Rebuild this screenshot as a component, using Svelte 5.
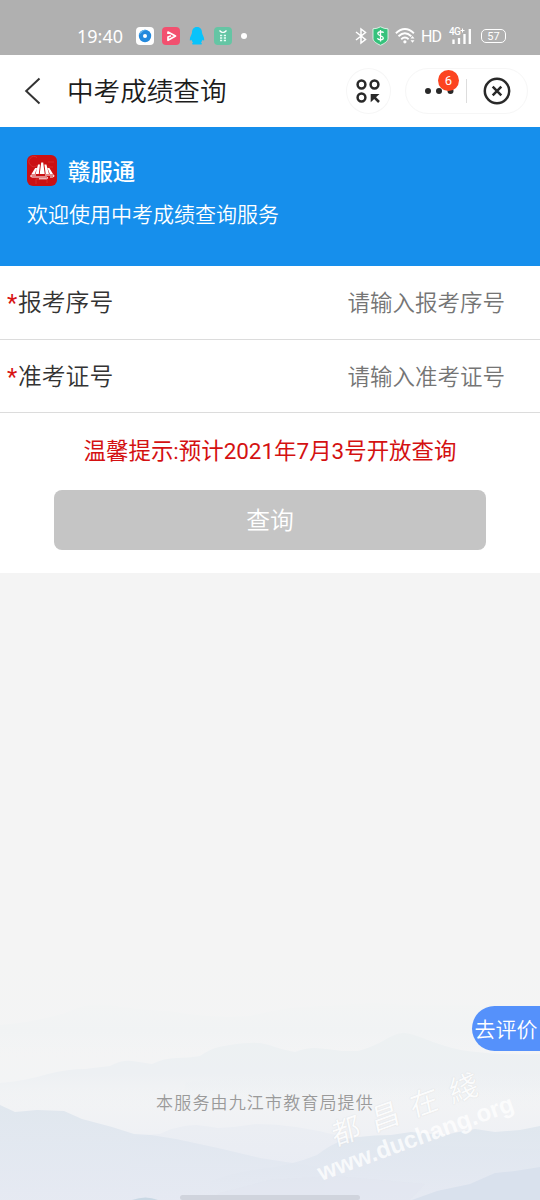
<script lang="ts">
	interface Field {
		id: string
		label: string
		placeholder: string
	}

	const fields: Field[] = [
		{ id: 'serial', label: '报考序号', placeholder: '请输入报考序号' },
		{ id: 'ticket', label: '准考证号', placeholder: '请输入准考证号' },
	]

	let values: Record<string, string> = $state({ serial: '', ticket: '' })
	let unread = $state(6)
</script>

<div class="page">
	<div class="status-bar">
		<span class="time">19:40</span>
		<svg class="apps" width="114" height="20" viewBox="0 0 114 20">
			<rect x="1" y="1" width="18" height="18" rx="4" fill="#fff" />
			<circle cx="10" cy="10" r="6.2" fill="#2389dd" />
			<path d="M4 9a6.2 6.2 0 0 1 8-4.9c-4 0-5 3-8 4.900z" fill="#68b7ee" />
			<circle cx="10" cy="10" r="2" fill="#fff" />
			<rect x="27" y="1" width="18" height="18" rx="4" fill="#f2506f" />
			<path
				d="M33 8V6l7.500 4-7.500 4.300V11l3-1.200"
				fill="none"
				stroke="#fff"
				stroke-width="1.700"
				stroke-linejoin="round"
			/>
			<path
				d="M62 1c-3.500 0-5 2.500-5 5.500 0 2-2.200 4-2.200 7.200 0 1.500 1 .8 1.700 0 .3 1.300.8 2 1.500 2.700-1.500.8-1 2.100.5 2.100h7c1.500 0 2-1.300.5-2.100.7-.7 1.200-1.400 1.500-2.700.7.8 1.700 1.500 1.700 0 0-3.200-2.200-5.200-2.200-7.200C67 3.500 65.500 1 62 1z"
				fill="#08c3fb"
			/>
			<rect x="79" y="1" width="18" height="18" rx="4" fill="#65c5a4" />
			<path d="M84.500 4.500q3.500 4 7 0" fill="none" stroke="#fff" stroke-width="1.200" />
			<path
				d="M85 9.500h2.200M88.800 9.500H91M85 12h2.200M88.800 12H91M85 14.500h2.200M88.800 14.500H91"
				stroke="#e6fff5"
				stroke-width="1.500"
			/>
			<circle cx="109" cy="10" r="3" fill="#fff" />
		</svg>
		<div class="system">
			<svg width="12" height="18" viewBox="0 0 12 18">
				<path
					d="M1 5l9.500 7.500L6 16V2l4.500 3.500L1 13"
					fill="none"
					stroke="#fff"
					stroke-width="1.500"
				/>
			</svg>
			<svg class="shield" width="17" height="20" viewBox="0 0 17 20">
				<path
					d="M8.500.8q3.500 2 7.500 2v9.500c0 3-3.500 5.200-7.500 7-4-1.800-7.500-4-7.500-7V2.800q4 0 7.500-2z"
					fill="#36c27c"
					stroke="#e5f5ec"
					stroke-width=".9"
				/>
				<path
					d="M11.600 6.800C11 5.500 6 5 5.800 7.600c-.1 2.500 5.500 1.800 5.500 4.400 0 2.400-5 2.300-5.900.3M8.500 4v11.500"
					fill="none"
					stroke="#fff"
					stroke-width="1.300"
				/>
			</svg>
			<svg class="wifi" width="22" height="18" viewBox="0 0 22 18">
				<g fill="none" stroke="#fff" stroke-width="1.900">
					<path d="M.9 6.200q9-8.200 18 0" />
					<path d="M3.500 9.200q6.400-5.800 12.800 0" />
					<path d="M6.200 12.200q3.700-3.200 7.400 0" />
				</g>
				<circle cx="9.900" cy="14.800" r="1.600" fill="#fff" />
				<path d="M15.500 11.500l2-2.500 2 2.500zM15.500 13.300l2 2.500 2-2.500z" fill="#fff" />
			</svg>
			<span class="hd">HD</span>
			<div class="signal">
				<span>4G</span>
				<svg width="23" height="18" viewBox="0 0 23 18">
					<path d="M11.500 3.500h4M13.500 1.500v4" stroke="#fff" stroke-width="1" />
					<path
						d="M4.500 17v-4.500M10 17v-6M15.500 17V7M20.800 17V2"
						stroke="#fff"
						stroke-width="2.300"
					/>
				</svg>
			</div>
			<div class="battery"><span>57</span></div>
		</div>
	</div>

	<header class="nav">
		<svg class="back" width="18" height="28" viewBox="0 0 18 28">
			<path d="M15.500 1.500L2.200 14l13.300 12.500" fill="none" stroke="#333" stroke-width="2" />
		</svg>
		<h1>中考成绩查询</h1>
		<button class="round" aria-label="apps">
			<svg width="25" height="25" viewBox="0 0 25 25">
				<g fill="none" stroke="#292929" stroke-width="2.500">
					<circle cx="5.500" cy="5.500" r="3.900" />
					<circle cx="18.500" cy="5.500" r="3.900" />
					<circle cx="5.500" cy="18.500" r="3.900" />
					<path d="M16.500 16.500l6.500 6.500" />
				</g>
				<path d="M14.700 15h8.800l-3 2.700-2.800 2.800-3 2.700z" fill="#292929" />
			</svg>
		</button>
		<div class="capsule">
			<button class="more" aria-label="more">
				<svg width="30" height="8" viewBox="0 0 30 8" fill="#292929">
					<circle cx="4" cy="4" r="3" />
					<circle cx="15" cy="4" r="3" />
					<circle cx="26.500" cy="4" r="3" />
				</svg>
				{#if unread}
					<span class="badge">{unread}</span>
				{/if}
			</button>
			<span class="divider"></span>
			<button class="close" aria-label="close">
				<svg width="28" height="28" viewBox="0 0 28 28">
					<g fill="none" stroke="#292929" stroke-width="2.500">
						<circle cx="14" cy="14" r="12.200" />
						<path d="M9.700 9.700l8.600 8.600M18.300 9.700l-8.600 8.600" />
					</g>
				</svg>
			</button>
		</div>
	</header>

	<section class="banner">
		<div class="brand">
			<svg width="30" height="31" viewBox="0 0 30 31">
				<rect width="30" height="31" rx="6" fill="#cb1013" />
				<path
					d="M10 2.500a5 5 0 1 0 0 8M21 7h6M21 12h5M9 29v-5h4M20 28v-4"
					fill="none"
					stroke="#d63334"
					stroke-width=".8"
				/>
				<path
					d="M14.200 7.500h2l1.500 11.500h-5zM11 9.500h2L11.800 19H8.500zM17.400 9.500h2l2.600 9.500h-3.300zM8.200 13h1.900L7.800 19H4.500zM20.500 13h1.900l3.600 6h-3.200z"
					fill="#fff"
				/>
				<path
					d="M9 20H4.300q-1.700 1.700.7 2h14.500c1.500.1 1.500 1.700 0 1.800H12M18 20h8.700q1 1.800-1 2H23"
					fill="none"
					stroke="#fff"
					stroke-width="1"
				/>
			</svg>
			<strong>赣服通</strong>
		</div>
		<p>欢迎使用中考成绩查询服务</p>
	</section>

	<form class="form">
		{#each fields as field (field.id)}
			<div class="row">
				<label for={field.id}><i>*</i>{field.label}</label>
				<input id={field.id} placeholder={field.placeholder} bind:value={values[field.id]} />
			</div>
		{/each}
		<p class="notice">温馨提示:预计2021年7月3号开放查询</p>
		<button class="submit" type="button">查询</button>
	</form>

	<footer>
		<svg class="hills" width="540" height="240" viewBox="0 0 540 240">
			<defs>
				<linearGradient id="sky" x1="0" y1="0" x2="0" y2="1">
					<stop offset="0" stop-color="#f4f4f4" />
					<stop offset=".55" stop-color="#f3f4f5" />
					<stop offset="1" stop-color="#e9ecf4" />
				</linearGradient>
				<linearGradient id="far" x1="0" y1="0" x2="0" y2="1">
					<stop offset="0" stop-color="#edf1f2" />
					<stop offset=".5" stop-color="#edf0f3" />
					<stop offset="1" stop-color="#f1f3f5" stop-opacity="0" />
				</linearGradient>
				<linearGradient id="mist" x1="0" y1="0" x2="0" y2="1">
					<stop offset="0" stop-color="#f3f4f4" />
					<stop offset=".5" stop-color="#f1f3f4" />
					<stop offset="1" stop-color="#f3f4f5" stop-opacity="0" />
				</linearGradient>
				<linearGradient id="mid" x1="0" y1="0" x2="0" y2="1">
					<stop offset="0" stop-color="#ebeef3" />
					<stop offset="1" stop-color="#e8ebf4" />
				</linearGradient>
				<linearGradient id="near" x1="0" y1="0" x2="0" y2="1">
					<stop offset="0" stop-color="#dde5ed" />
					<stop offset=".5" stop-color="#e1e7f0" />
					<stop offset="1" stop-color="#e5e9f2" />
				</linearGradient>
			</defs>
			<rect width="540" height="240" fill="url(#sky)" />
			<path
				d="M0 65q35-3 65-12 22-11 44-8 30 5 60 6 45 8 81 5 40-11 78-10 40-5 80-1 65-2 132 5v50H0z"
				fill="url(#mist)"
			/>
			<path
				d="M0 123q25-2 48-9 20-5 37-5l25-3q11-6 22-5l20 3q12-6 25-6 12 0 23-2 10-7 19-9 20-4 30-4 10-1 20 2 14 5 26 7 10-4 20-4 14 1 27 3h16q12-3 25-10 14-9 22-8 8 1 15 4 12 5 25 9 16 5 32 6 22 3 63 2v60H0z"
				fill="url(#far)"
			/>
			<path d="M185 122l60-6h45l55-8 90 2 105-5v40H185z" fill="url(#far)" opacity=".35" />
			<path
				d="M130 179q20-5 30-5 10-5 16-6 10-3 20-3 10 1 22 3 20-1 38-4 20 0 40 3 20 3 40 8 25 8 50 9l154 5v51H130z"
				fill="url(#mid)"
			/>
			<path
				d="M0 145l15 7 22-2 27 1 18 8 30 8 22 7 17 1 25 4 42 9 42 10 65 10v32H0z"
				fill="url(#near)"
				opacity=".85"
			/>
			<path
				d="M210 221q25-9 50-12 30-3 57-14 22-17 42-18 15-2 32-2l20-3 33 3 15-3 16-3 20 3 25-2 20-4v74H210z"
				fill="url(#near)"
				opacity=".85"
			/>
			<path d="M220 233l50-13 65-4 90 8-15 16H210z" fill="#e1e6f0" opacity=".5" />
			<path d="M412 240l25-9 33-7 25-11 20-2 25-4v33z" fill="#d9e1ed" />
			<path d="M132 240q14-5 26 0z" fill="#c9d8e4" />
		</svg>
		<p>本服务由九江市教育局提供</p>
		<div class="watermark">
			<div class="watermark-name">
				<span>都</span><span>昌</span><span>在</span><span>綫</span>
			</div>
			<div class="watermark-url">www.duchang.org</div>
		</div>
		<div class="home-bar"></div>
	</footer>

	<button class="rate">去评价</button>
</div>

<style>
	:global(body) {
		margin: 0;
	}

	.page {
		position: relative;
		display: flex;
		flex-direction: column;
		width: 540px;
		height: 1200px;
		overflow: hidden;
		background: #f4f4f4;
		font-family: Roboto, 'Noto Sans CJK SC', sans-serif;
		color: #333;
	}

	h1,
	p {
		margin: 0;
		font-weight: 350;
	}

	button {
		display: flex;
		align-items: center;
		justify-content: center;
		border: 0;
		padding: 0;
		background: none;
		font-family: inherit;
	}

	svg {
		display: block;
		flex-shrink: 0;
	}

	.status-bar {
		display: flex;
		align-items: center;
		box-sizing: border-box;
		height: 55px;
		padding: 17px 34px 0 77px;
		background: #b0b0b0;
		color: #fff;
	}

	.time {
		width: 58px;
		font-family: 'Noto Sans', sans-serif;
		font-size: 18px;
		line-height: 20px;
	}

	.system {
		display: flex;
		align-items: center;
		margin-left: auto;
	}

	.shield {
		margin-left: 5px;
	}

	.wifi {
		margin-left: 6px;
	}

	.hd {
		margin-left: 4px;
		font-size: 16px;
		letter-spacing: -1px;
		transform: scaleY(1.05);
	}

	.signal {
		position: relative;
		margin-left: 8px;
	}

	.signal span {
		position: absolute;
		top: 0;
		left: 0;
		font-size: 10px;
		font-weight: 500;
		line-height: 9px;
		letter-spacing: -0.8px;
	}

	.battery {
		display: flex;
		align-items: center;
		justify-content: center;
		box-sizing: border-box;
		width: 25px;
		height: 14px;
		margin-left: 9px;
		border: 1.5px solid #fff;
		border-radius: 5px;
		font-size: 11px;
		line-height: 11px;
	}

	.nav {
		display: flex;
		align-items: center;
		box-sizing: border-box;
		height: 72px;
		padding: 0 12px 0 24px;
		background: #fff;
	}

	h1 {
		margin-left: 25px;
		padding-top: 2px;
		font-size: 26.6px;
		line-height: 40px;
		color: #1c1c1c;
	}

	.round {
		box-sizing: border-box;
		width: 45px;
		height: 46px;
		margin-left: auto;
		border: 1px solid #f6f6f6;
		border-radius: 50%;
	}

	.capsule {
		display: flex;
		align-items: center;
		box-sizing: border-box;
		width: 123px;
		height: 46px;
		margin-left: 14px;
		border: 1px solid #f6f6f6;
		border-radius: 23px;
	}

	.more {
		position: relative;
		width: 60px;
		height: 44px;
		padding-left: 5px;
	}

	.badge {
		position: absolute;
		top: 1px;
		left: 32px;
		width: 21px;
		height: 21px;
		border-radius: 50%;
		background: #fc4420;
		color: #fff;
		font-size: 13px;
		line-height: 22px;
		text-align: center;
	}

	.divider {
		width: 1px;
		height: 24px;
		background: #ddd;
	}

	.close {
		flex: 1;
	}

	.banner {
		box-sizing: border-box;
		height: 139px;
		padding: 28px 27px 0;
		background: #168fec;
		color: #fff;
	}

	.brand {
		display: flex;
		align-items: center;
		gap: 11px;
		height: 31px;
	}

	.brand strong {
		padding-top: 3px;
		font-size: 22.4px;
		font-weight: 500;
		line-height: 31px;
	}

	.banner p {
		margin-top: 14px;
		font-size: 21px;
		line-height: 30px;
	}

	.form {
		height: 307px;
		background: #fff;
	}

	.row {
		display: flex;
		align-items: center;
		justify-content: space-between;
		box-sizing: border-box;
		height: 73.5px;
		padding: 2px 35px 0 7px;
		border-bottom: 1px solid #dcdcdc;
	}

	.row label {
		font-size: 23.8px;
		font-weight: 350;
		line-height: 34px;
	}

	.row i {
		display: inline-block;
		width: 11px;
		font-style: normal;
		font-weight: 400;
		color: #d81414;
	}

	.row input {
		width: 260px;
		border: 0;
		padding: 0;
		outline: 0;
		background: none;
		font-family: inherit;
		font-size: 22.5px;
		font-weight: 350;
		line-height: 34px;
		text-align: right;
	}

	.row input::placeholder {
		color: #757575;
	}

	.notice {
		padding-top: 21px;
		font-size: 22.45px;
		font-weight: 400;
		line-height: 34px;
		text-align: center;
		color: #d41111;
	}

	.submit {
		width: 432px;
		height: 60px;
		margin: 22px auto 0;
		padding-bottom: 4px;
		border-radius: 8px;
		background: #c5c5c5;
		color: #fff;
		font-size: 23.8px;
		font-weight: 350;
	}

	footer {
		position: relative;
		display: flex;
		flex-direction: column;
		align-items: center;
		height: 240px;
		margin-top: auto;
	}

	.hills {
		position: absolute;
		top: 0;
		left: 0;
	}

	footer p {
		position: relative;
		margin-top: 131px;
		padding-right: 10px;
		font-size: 17px;
		line-height: 25px;
		letter-spacing: 1.15px;
		color: #9a9a9a;
	}

	.watermark {
		position: absolute;
		top: 130px;
		left: 300px;
		width: 220px;
		color: #fff;
		opacity: 0.75;
		transform: rotate(-20deg);
	}

	.watermark-name {
		display: flex;
		justify-content: space-between;
		width: 154px;
		padding-left: 33px;
		font-family: 'Noto Sans CJK TC', sans-serif;
		font-size: 29px;
		line-height: 32px;
		text-shadow: 0 0 1px #ccc;
	}

	.watermark-name span {
		transform: skewX(-8deg);
	}

	.watermark-url {
		font-family: 'Liberation Sans', sans-serif;
		font-size: 24px;
		font-weight: 700;
		line-height: 34px;
		text-align: center;
	}

	.home-bar {
		position: absolute;
		bottom: 0;
		left: 180px;
		width: 180px;
		height: 5px;
		border-radius: 3px;
		background: #d0d4dd;
	}

	.rate {
		position: absolute;
		top: 1006px;
		right: 0;
		width: 68px;
		height: 45px;
		padding-bottom: 2px;
		border-radius: 23px 0 0 23px;
		background: #5591fb;
		color: #fff;
		font-size: 21px;
		font-weight: 350;
	}
</style>
